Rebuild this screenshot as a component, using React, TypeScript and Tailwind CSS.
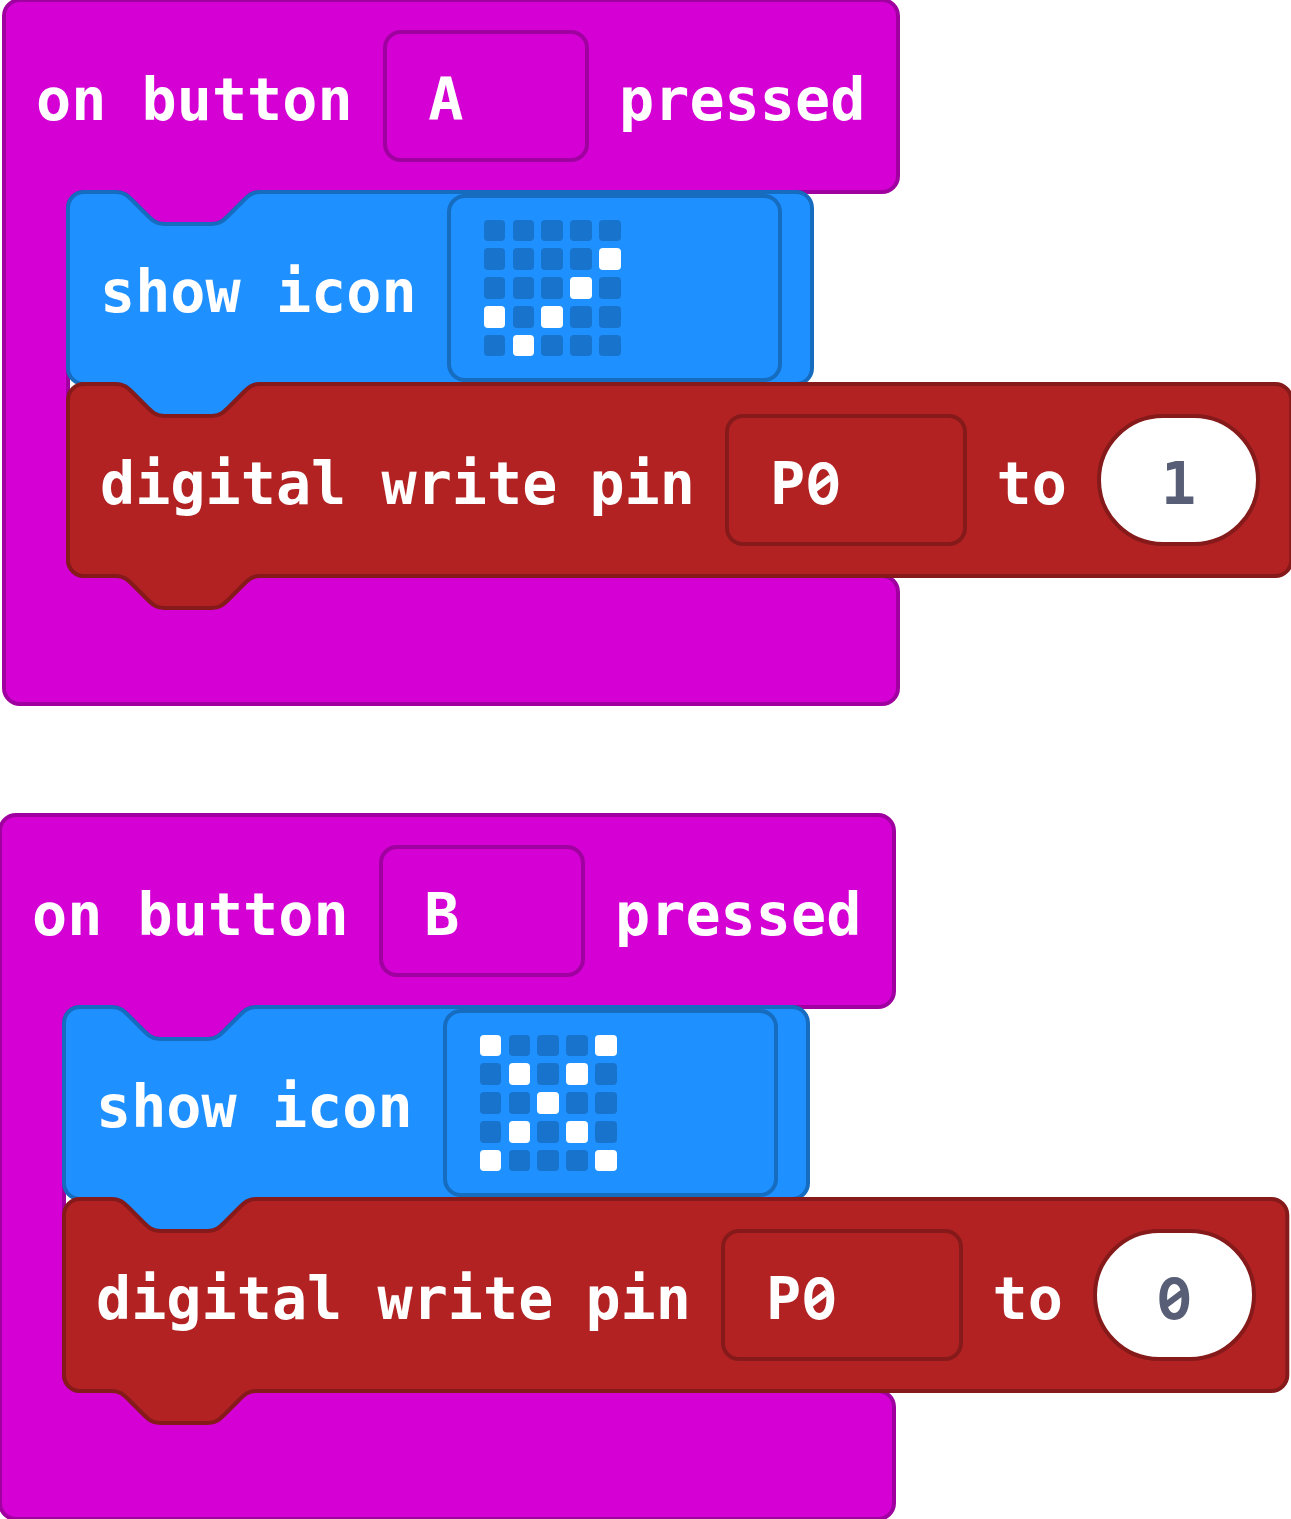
import type { ReactNode } from "react";

const NOTCH = "c8,0 12,4 16,8 l16,16 c4,4 8,8 16,8 h48 c8,0 12,-4 16,-8 l16,-16 c4,-4 8,-8 16,-8";
const NOTCH_BACK = "c-8,0 -12,4 -16,8 l-16,16 c-4,4 -8,8 -16,8 h-48 c-8,0 -12,-4 -16,-8 l-16,-16 c-4,-4 -8,-8 -16,-8";

function Outline({ d, className }: { d: string; className: string }) {
  return (
    <svg className="absolute left-0 top-0 h-full w-full overflow-visible" aria-hidden="true">
      <path d={d} strokeWidth="4" className={className} />
    </svg>
  );
}

/** A statement block with a notch on top and a matching tab below. */
function Statement({ width, colors, children }: { width: number; colors: string; children: ReactNode }) {
  const d = `M0,16 a16,16 0 0 1 16,-16 h32 ${NOTCH} H${width - 16} a16,16 0 0 1 16,16 v160 a16,16 0 0 1 -16,16 H192 ${NOTCH_BACK} h-32 a16,16 0 0 1 -16,-16 z`;
  return (
    <div className="relative h-48 w-max">
      <Outline d={d} className={colors} />
      <div className="relative flex h-full items-center gap-8 px-8">{children}</div>
    </div>
  );
}

function Label({ children }: { children: ReactNode }) {
  return <span className="whitespace-pre pt-2">{children}</span>;
}

/** A zero with a slash, set in the same cell as the monospaced characters. */
function Zero() {
  return (
    <span className="relative inline-flex w-[35.2px] justify-center font-['Inter',sans-serif] text-[57px] tracking-normal">
      <span className="inline-block scale-x-90">0</span>
      <svg viewBox="0 0 35.2 57" className="absolute inset-0 h-full w-full" aria-hidden="true">
        <path d="M9.5 34.5 L25.5 22.5" stroke="currentColor" strokeWidth="6" />
      </svg>
    </span>
  );
}

function Dropdown({ className, children }: { className: string; children: ReactNode }) {
  return (
    <div className={`-mx-0.5 flex items-center rounded-[18px] border-4 ${className}`}>{children}</div>
  );
}

function Leds({ rows }: { rows: string[] }) {
  return (
    <div className="grid grid-cols-5 gap-[7.2px]">
      {rows.join("").split("").map((c, i) => (
        <i
          key={i}
          className={c === "#" ? "size-[21.6px] rounded-[4px] bg-white" : "size-[21.6px] rounded-[4px] bg-[#1873cc]"}
        />
      ))}
    </div>
  );
}

function ButtonEvent({ button, rows, value }: { button: string; rows: string[]; value: ReactNode }) {
  const w = 894;
  const d = `M0,16 a16,16 0 0 1 16,-16 H${w - 16} a16,16 0 0 1 16,16 v160 a16,16 0 0 1 -16,16 H256 ${NOTCH_BACK} h-32 a16,16 0 0 0 -16,16 V560 a16,16 0 0 0 16,16 H${w - 16} a16,16 0 0 1 16,16 v96 a16,16 0 0 1 -16,16 H16 a16,16 0 0 1 -16,-16 z`;
  return (
    <section className="relative h-[704px] w-max">
      <Outline d={d} className="fill-[#d400d4] stroke-[#9f009f]" />
      <div className="relative flex h-48 items-center gap-8 pl-8">
        <Label>on button</Label>
        <Dropdown className="h-[132px] w-[206.4px] border-[#9f009f] pl-[41.5px]">
          <Label>{button}</Label>
        </Dropdown>
        <Label>pressed</Label>
      </div>
      <div className="relative flex flex-col pl-16">
        <Statement width={744} colors="fill-[#1e90ff] stroke-[#166cbf]">
          <Label>show icon</Label>
          <Dropdown className="h-[188px] w-[335.2px] border-[#166cbf] pl-[33.2px]">
            <Leds rows={rows} />
          </Dropdown>
        </Statement>
        <Statement width={1223.3} colors="fill-[#b22222] stroke-[#861a1a]">
          <Label>digital write</Label>
          <Label>pin</Label>
          <Dropdown className="h-[132px] w-[241.6px] border-[#861a1a] pl-[41px]">
            <Label>P<Zero /></Label>
          </Dropdown>
          <Label>to</Label>
          <div className="-mx-0.5 flex h-[132px] w-[163.2px] items-center justify-center rounded-[66px] border-4 border-[#861a1a] bg-white text-[#575e75]">
            <Label>{value}</Label>
          </div>
        </Statement>
      </div>
    </section>
  );
}

export default function App() {
  return (
    <main className="flex h-[1519px] w-[1291px] flex-col gap-[111px] overflow-hidden bg-white font-['DejaVu_Sans_Mono',monospace] text-[58.4px] leading-none font-bold tracking-[0.03px] text-white">
      <div className="pl-1">
        <ButtonEvent button="A" rows={[".....", "....#", "...#.", "#.#..", ".#..."]} value="1" />
      </div>
      <ButtonEvent button="B" rows={["#...#", ".#.#.", "..#..", ".#.#.", "#...#"]} value={<Zero />} />
    </main>
  );
}
